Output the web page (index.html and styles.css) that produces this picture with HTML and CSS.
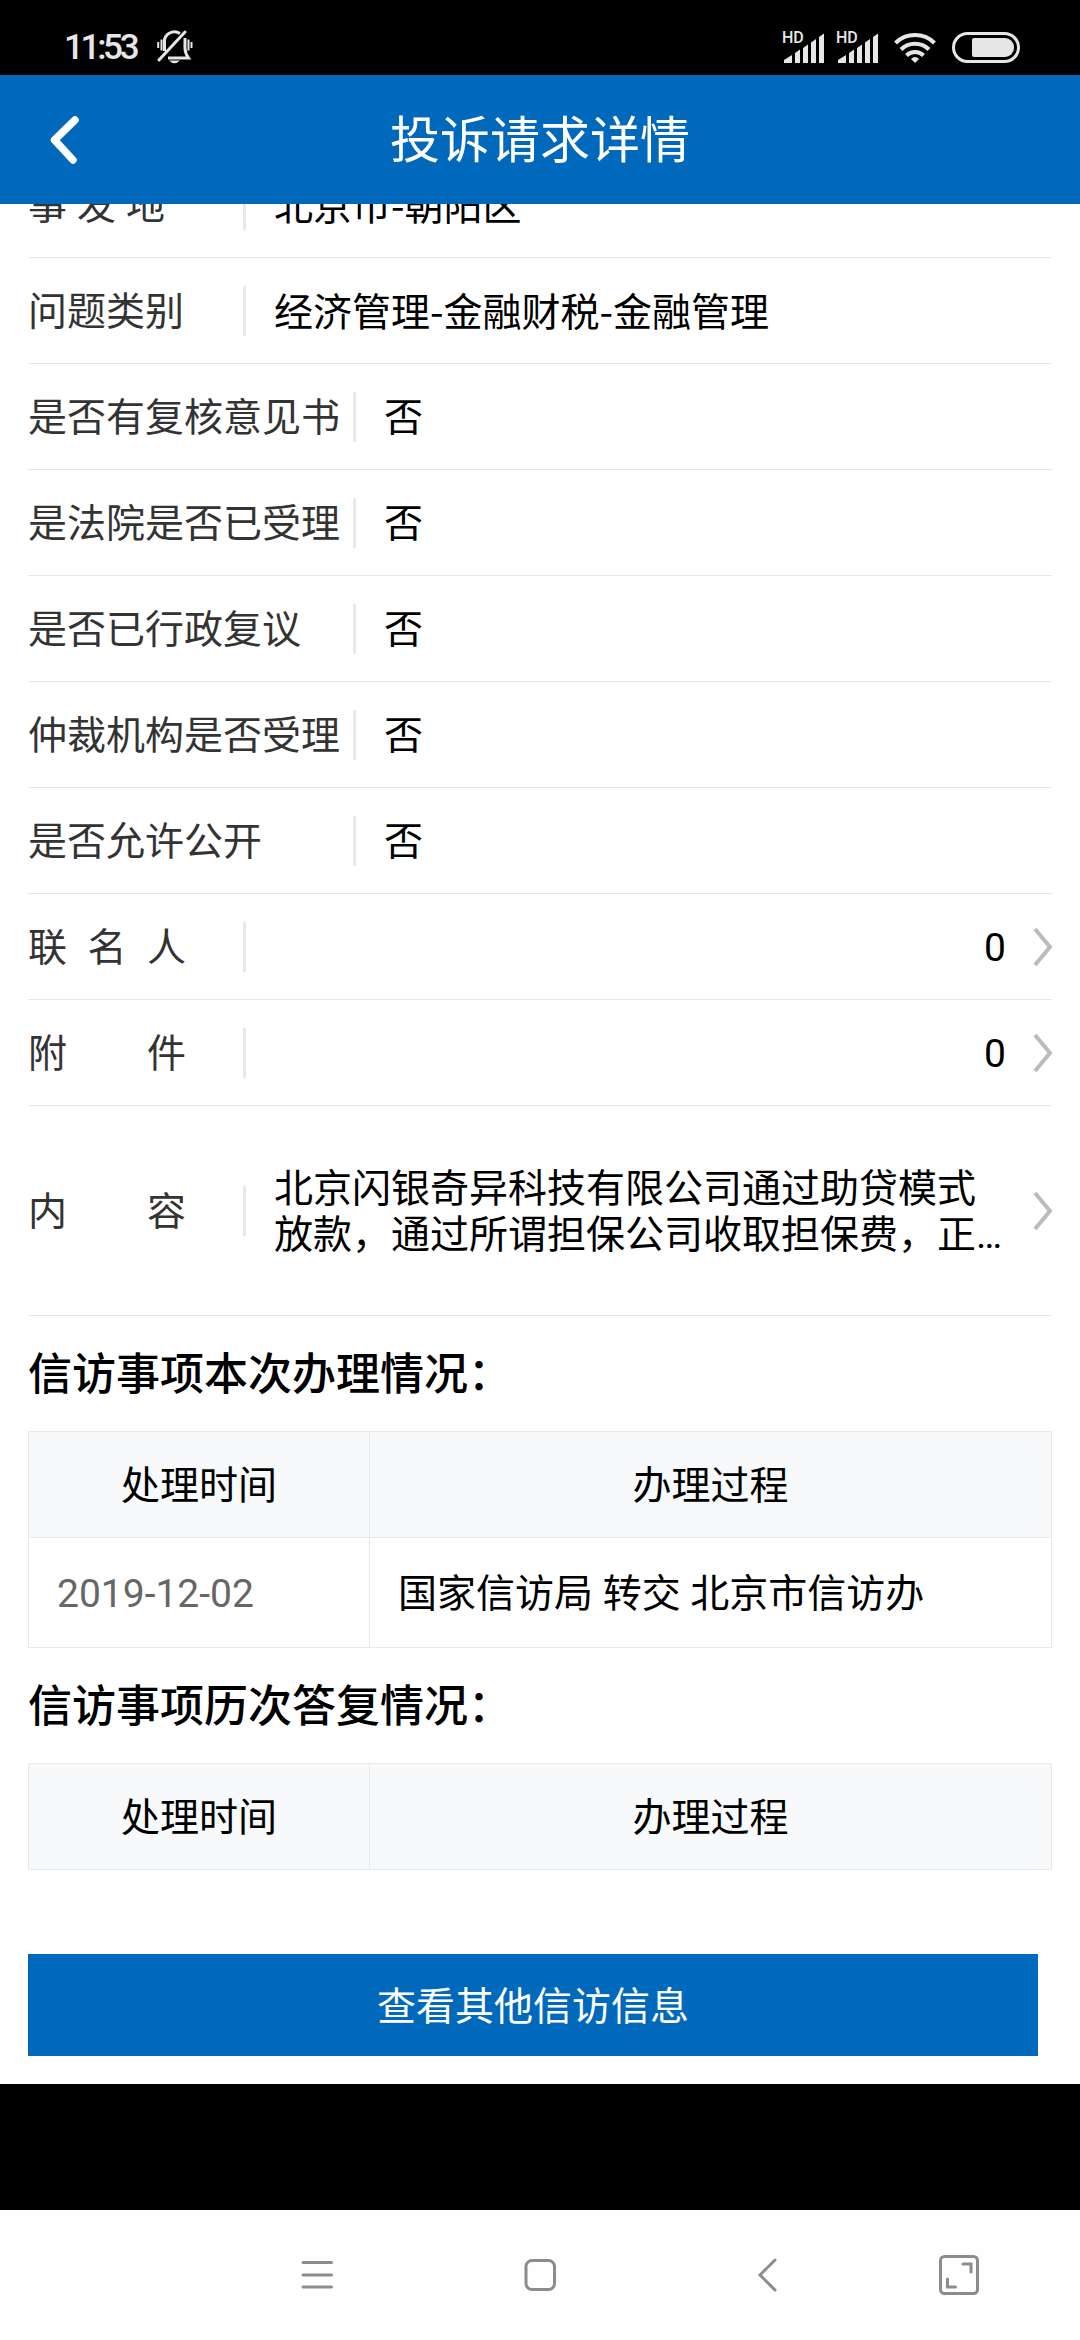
FILE: index.html
```
<!DOCTYPE html>
<html lang="zh-CN">

<head>
    <meta charset="UTF-8">
    <meta name="viewport" content="width=device-width, initial-scale=1.0">
    <title>投诉请求详情</title>
    <link rel="stylesheet" href="styles.css">
</head>

<body>
    <!-- icons used more than once -->
    <svg width="0" height="0" class="defs">
        <symbol id="arrow" viewBox="0 0 20 40">
            <path d="M3 2L18 20L3 38" fill="none" stroke="#bbb" stroke-width="4" />
        </symbol>
        <symbol id="signal" viewBox="0 0 41 31">
            <path d="M1 28L9 23V31H1ZM12 21L17 17.500V31H12ZM20 16L25 12.500V31H20ZM28 10.500L33 7V31H28ZM36 5L41 1.500V31H36Z" fill="#e6e6e6" />
        </symbol>
    </svg>

    <div class="status">
        <div class="time">11:53</div>
        <svg class="bell" width="36" height="34" viewBox="0 0 36 34" fill="none" stroke="#e6e6e6" stroke-width="3">
            <path d="M7.500 21V13A10 10 0 0 1 23 3.500M28 8V18Q28 23 31.500 28H11" />
            <path d="M2 30L28 2" stroke-linecap="round" />
            <path d="M1.200 12V18M4.500 9.500V20.500M34.500 12V18M31.500 9.500V20.500" stroke-width="2" />
            <path d="M12 30.500H23Q17.500 36 12 30.500Z" fill="#e6e6e6" stroke="none" />
        </svg>
        <div class="status-right">
            <div class="signal"><span>HD</span><svg width="41" height="31"><use href="#signal" /></svg></div>
            <div class="signal"><span>HD</span><svg width="41" height="31"><use href="#signal" /></svg></div>
            <svg class="wifi" width="42" height="31" viewBox="0 0 42 31" fill="none" stroke="#e6e6e6" stroke-width="4">
                <path d="M1.500 11A28 28 0 0 1 40.500 11M7 17.500A20 20 0 0 1 35 17.500M12.500 23.500A12 12 0 0 1 29.500 23.500" />
                <path d="M17 27Q21 23 25 27L21 31Z" fill="#e6e6e6" stroke="none" />
            </svg>
            <div class="battery"><div class="level"></div></div>
        </div>
    </div>

    <div class="header">
        <svg width="30" height="50" viewBox="0 0 30 50"><path d="M25 5L4.500 25L23 45" fill="none" stroke="#fff" stroke-width="7.500" stroke-linecap="round" stroke-linejoin="round" /></svg>
        <div class="title">投诉请求详情</div>
    </div>

    <div class="content">
        <div class="list">
            <div class="row">
                <div class="label"><span class="spread narrow">事 发 地</span></div>
                <div class="value category">北京市-朝阳区</div>
            </div>
            <div class="row">
                <div class="label">问题类别</div>
                <div class="value category">经济管理-金融财税-金融管理</div>
            </div>
            <div class="row">
                <div class="label long">是否有复核意见书</div>
                <div class="value">否</div>
            </div>
            <div class="row">
                <div class="label long">是法院是否已受理</div>
                <div class="value">否</div>
            </div>
            <div class="row">
                <div class="label long">是否已行政复议</div>
                <div class="value">否</div>
            </div>
            <div class="row">
                <div class="label long">仲裁机构是否受理</div>
                <div class="value">否</div>
            </div>
            <div class="row">
                <div class="label long">是否允许公开</div>
                <div class="value">否</div>
            </div>
            <div class="row">
                <div class="label"><span class="spread">联 名 人</span></div>
                <div class="value count">0</div>
                <svg class="arrow" width="20" height="40"><use href="#arrow" /></svg>
            </div>
            <div class="row">
                <div class="label"><span class="spread">附 件</span></div>
                <div class="value count">0</div>
                <svg class="arrow" width="20" height="40"><use href="#arrow" /></svg>
            </div>
            <div class="row tall">
                <div class="label"><span class="spread">内 容</span></div>
                <div class="value detail">北京闪银奇异科技有限公司通过助贷模式<br>放款，通过所谓担保公司收取担保费，正…</div>
                <svg class="arrow" width="20" height="40"><use href="#arrow" /></svg>
            </div>
        </div>

        <h2>信访事项本次办理情况：</h2>
        <table>
            <tr><th class="date">处理时间</th><th>办理过程</th></tr>
            <tr><td class="date">2019-12-02</td><td>国家信访局 转交 北京市信访办</td></tr>
        </table>

        <h2>信访事项历次答复情况：</h2>
        <table>
            <tr><th class="date">处理时间</th><th>办理过程</th></tr>
        </table>

        <button type="button">查看其他信访信息</button>
    </div>

    <div class="gap"></div>

    <!-- system navigation -->
    <div class="nav">
        <svg class="menu" width="32" height="42" viewBox="0 0 32 42"><path d="M2 8.500H30.500M2 21H30.500M2 33H30.500" /></svg>
        <svg class="home" width="32" height="42" viewBox="0 0 32 42"><rect x="2" y="6.500" width="28.500" height="29" rx="6" /></svg>
        <svg class="back" width="20" height="42" viewBox="0 0 20 42"><path d="M18 6L3 21L18 36" /></svg>
        <svg class="full" width="42" height="42" viewBox="0 0 42 42"><rect x="2.500" y="2.500" width="37" height="37" rx="4" /><path d="M25 10H33V18M9.500 25V33H17.500" /></svg>
    </div>
</body>

</html>
```

FILE: styles.css
```
* {
    margin: 0;
    padding: 0;
    box-sizing: border-box;
}

body {
    width: 1080px;
    height: 2340px;
    background-color: #fff;
    display: flex;
    flex-direction: column;
    overflow: hidden;
    font-family: Roboto, "Noto Sans CJK SC", sans-serif;
    font-size: 39px;
    color: #000;
}

svg {
    display: block;
    flex-shrink: 0;
}

.defs {
    position: absolute;
}

/* Status bar */
.status {
    height: 75px;
    background-color: #000;
    color: #e6e6e6;
    display: flex;
    align-items: center;
    padding: 19px 60px 0 64px;
    flex-shrink: 0;
}

.time {
    width: 93px;
    font-size: 35px;
    font-weight: 500;
    letter-spacing: -3.3px;
    line-height: 40px;
    padding-top: 2px;
}

.status-right {
    margin-left: auto;
    display: flex;
    align-items: center;
}

.signal {
    width: 41px;
    height: 31px;
    margin-right: 13px;
    position: relative;
}

.signal span {
    position: absolute;
    left: -1px;
    top: -3px;
    font-size: 16px;
    font-weight: 500;
    line-height: 17px;
}

.wifi {
    margin: 0 16px 0 3px;
}

.battery {
    width: 68px;
    height: 31px;
    border: 3px solid #e6e6e6;
    border-radius: 16px;
    padding: 3px 3px 3px 17px;
}

.level {
    height: 19px;
    background-color: #e6e6e6;
    border-radius: 2px 9px 9px 2px;
}

/* Header */
.header {
    height: 129px;
    background-color: #0069bc;
    color: #fff;
    display: flex;
    align-items: center;
    padding: 0 50px;
    flex-shrink: 0;
}

.title {
    flex: 1;
    margin-right: 30px;
    padding-top: 3px;
    text-align: center;
    font-size: 50px;
    line-height: 60px;
}

/* Scrolled content */
.content {
    height: 1880px;
    padding: 0 28px;
    overflow: hidden;
    flex-shrink: 0;
}

.list {
    margin-top: -52px;
}

.row {
    height: 106px;
    border-bottom: 1px solid #e6e6e6;
    display: flex;
    align-items: center;
}

.row.tall {
    height: 210px;
}

.label {
    width: 218px;
    height: 50px;
    line-height: 53px;
    border-right: 3px solid #e8e8e8;
    color: #333;
    white-space: nowrap;
}

.label.long {
    width: 328px;
}

.spread {
    display: block;
    width: 158px;
    text-align-last: justify;
}

.spread.narrow {
    width: 137px;
}

.value {
    flex: 1;
    height: 50px;
    line-height: 53px;
    padding-left: 28px;
    white-space: nowrap;
}

.category {
    font-family: "Noto Sans CJK SC", sans-serif;
    line-height: 46px;
}

.count {
    text-align: right;
}

.detail {
    height: auto;
    line-height: 46px;
    padding-top: 3px;
}

.arrow {
    margin-left: 26px;
}

h2 {
    height: 115px;
    line-height: 119px;
    font-size: 44px;
    font-weight: 500;
}

/* Tables */
table {
    width: 1024px;
    table-layout: fixed;
    border-collapse: collapse;
}

th,
td {
    height: 106px;
    border: 1px solid #e6e8ea;
    font-weight: 400;
    line-height: 50px;
    padding-top: 3px;
}

th {
    background-color: #f8f9fb;
}

td {
    height: 110px;
    padding-left: 28px;
}

.date {
    width: 341px;
}

td.date {
    color: #666;
}

button {
    display: block;
    width: 1010px;
    height: 102px;
    margin-top: 84px;
    padding-top: 3px;
    background-color: #0069bc;
    color: #fff;
    border: none;
    font-family: inherit;
    font-size: 39px;
    line-height: 50px;
}

.gap {
    height: 126px;
    background-color: #000;
    flex-shrink: 0;
}

.nav {
    height: 130px;
    background-color: #fefefe;
    display: flex;
    align-items: center;
}

.nav svg {
    fill: none;
    stroke: #8c8c8c;
    stroke-width: 3;
    stroke-linecap: round;
}

.menu {
    margin-left: 301px;
}

.home {
    margin-left: 191px;
}

.back {
    margin-left: 201px;
}

.full {
    margin-left: 161px;
}
```
